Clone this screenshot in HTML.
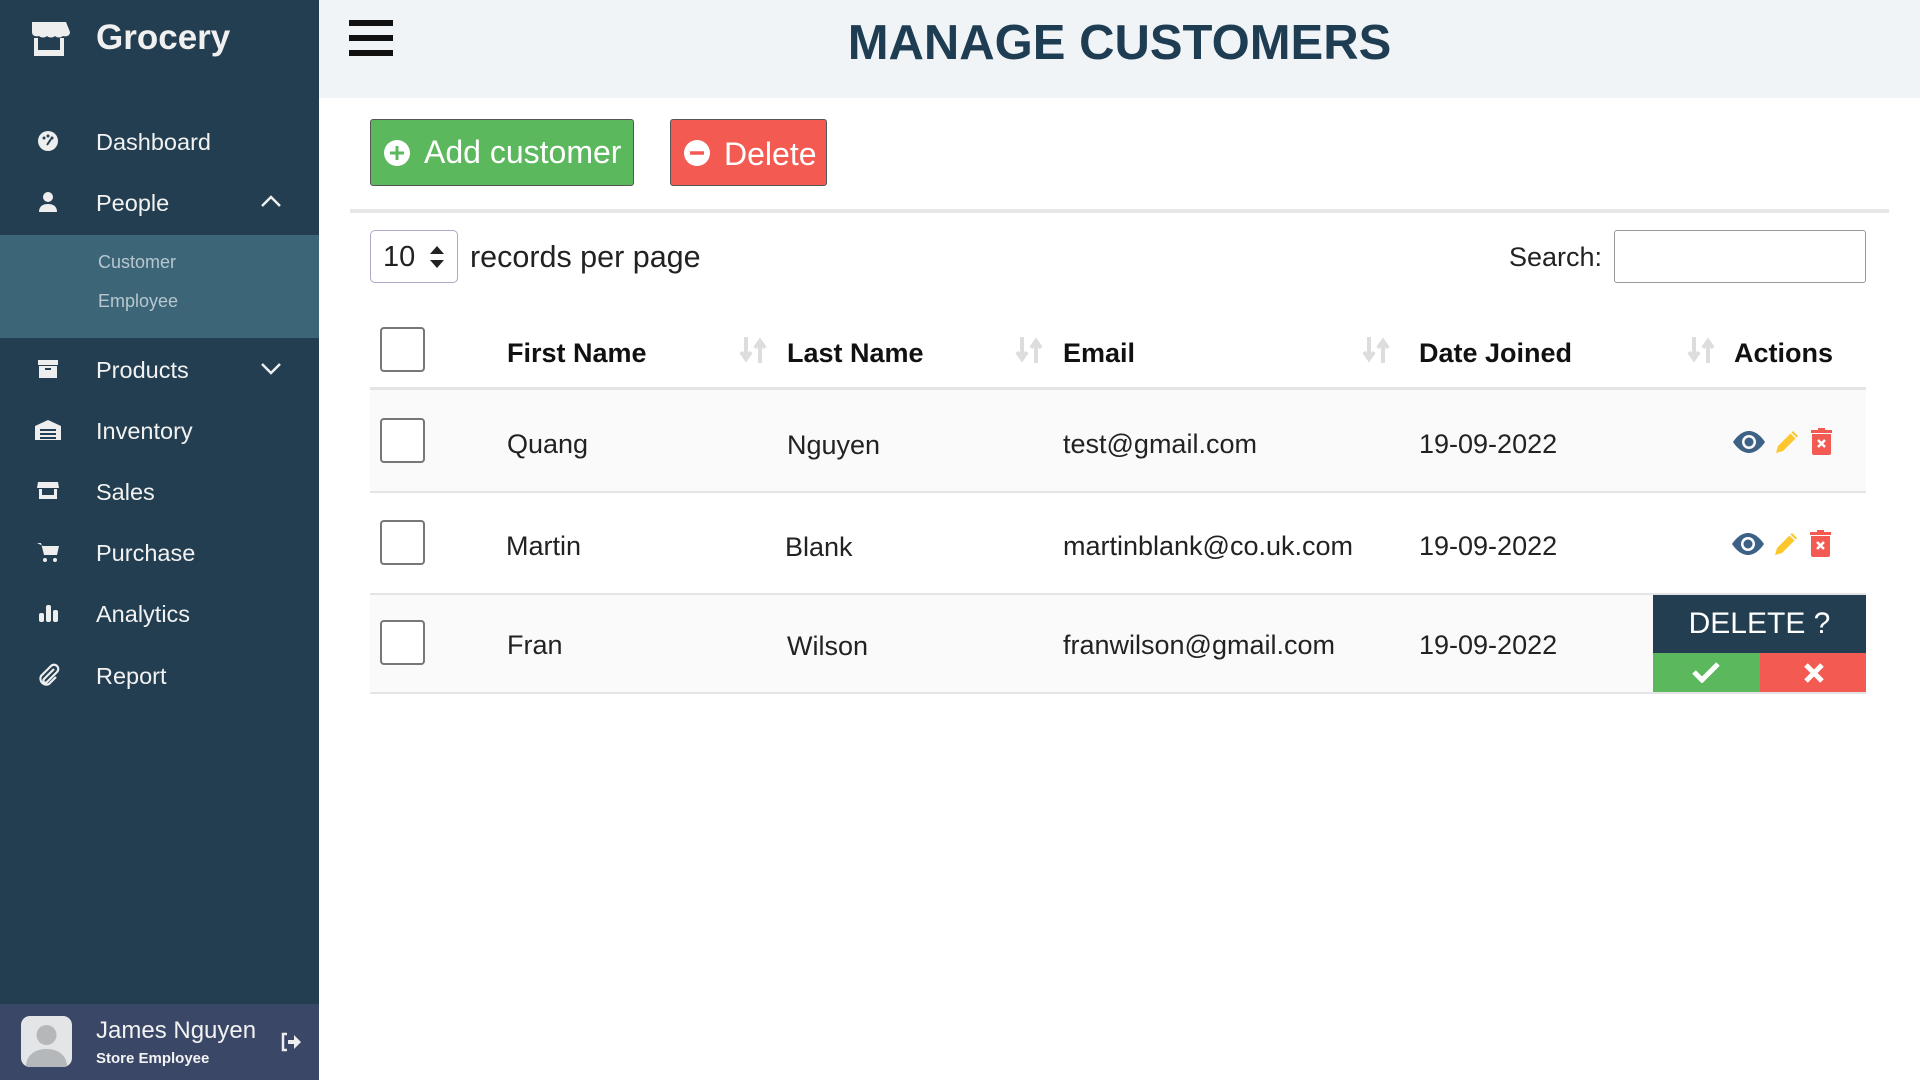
<!DOCTYPE html>
<html><head><meta charset="utf-8"><style>
*{box-sizing:border-box;margin:0;padding:0}
body{width:1920px;height:1080px;overflow:hidden;font-family:"Liberation Sans",sans-serif;background:#fff;position:relative}
.sb{position:absolute;left:0;top:0;width:319px;height:1080px;background:#223e50;color:#fff}
.abs{position:absolute}
.logo{left:96px;top:18px;font-size:35px;font-weight:bold;color:#f0f0f0}
.mi{position:absolute;left:96px;font-size:23.5px;color:#f2f2f2;line-height:30px;margin-top:1px}
.ic{position:absolute;left:36px;width:24px;height:24px}
.sub{position:absolute;left:0;top:235px;width:319px;height:103px;background:#3c6677}
.sub div{position:absolute;left:98px;font-size:18px;color:#b8c7cf}
.foot{position:absolute;left:0;top:1004px;width:319px;height:76px;background:#3a4766}
.hdr{position:absolute;left:319px;top:0;width:1601px;height:98px;background:#f0f4f7}
.title{position:absolute;left:0;width:100%;text-align:center;top:15px;font-size:49px;font-weight:bold;color:#1f3d52}
.btn{position:absolute;top:119px;height:67px;border-radius:3px;color:#fff;font-size:32px;line-height:65px;border:1px solid #555}
.th{position:absolute;top:338px;font-size:27px;font-weight:bold;color:#111}
.td{position:absolute;font-size:27px;color:#222;margin-top:2px}
.cb{position:absolute;left:380px;width:45px;height:45px;border:2px solid #777;border-radius:4px;background:#fff}
.sort{position:absolute;top:335px;width:30px;height:30px}
</style></head><body>
<div class="sb">
 <svg class="abs" style="left:28px;top:18px" width="42" height="42" viewBox="0 0 42 42"><path d="M4 4h34l4 10c0 4-4 5-7 4-2 2-6 2-8 0-2 2-6 2-8 0-2 2-6 2-8 0-3 1-7 0-7-4z" fill="#eee"/><path d="M6 20h4v12h22V20h4v18H6z" fill="#eee"/></svg>
 <div class="abs logo">Grocery</div>
 <svg class="ic" style="top:129px" viewBox="0 0 24 24"><circle cx="12" cy="12" r="10" fill="#eee"/><circle cx="8" cy="9" r="1.5" fill="#223e50"/><circle cx="12" cy="7" r="1.5" fill="#223e50"/><circle cx="16" cy="9" r="1.5" fill="#223e50"/><path d="M11 16l4-6" stroke="#223e50" stroke-width="2"/></svg>
 <div class="mi" style="top:126px">Dashboard</div>
 <svg class="ic" style="top:190px" viewBox="0 0 24 24"><circle cx="12" cy="7" r="5" fill="#eee"/><path d="M3 22c0-6 4-8 9-8s9 2 9 8z" fill="#eee"/></svg>
 <div class="mi" style="top:187px">People</div>
 <svg class="abs" style="left:260px;top:194px" width="22" height="14"><path d="M2 12l9-9 9 9" stroke="#eee" stroke-width="2.5" fill="none"/></svg>
 <div class="sub"><div style="top:17px">Customer</div><div style="top:56px">Employee</div></div>
 <svg class="ic" style="top:357px" viewBox="0 0 24 24"><rect x="2" y="3" width="20" height="5" fill="#eee"/><rect x="3" y="9" width="18" height="12" fill="#eee"/><rect x="9" y="11" width="6" height="2" fill="#223e50"/></svg>
 <div class="mi" style="top:354px">Products</div>
 <svg class="abs" style="left:260px;top:362px" width="22" height="14"><path d="M2 2l9 9 9-9" stroke="#eee" stroke-width="2.5" fill="none"/></svg>
 <svg class="ic" style="top:418px;left:34px;width:28px" viewBox="0 0 28 24"><path d="M1 8l13-6 13 6v14H1z" fill="#eee"/><rect x="6" y="11" width="16" height="2" fill="#223e50"/><rect x="6" y="15" width="16" height="2" fill="#223e50"/><rect x="6" y="19" width="16" height="2" fill="#223e50"/></svg>
 <div class="mi" style="top:415px">Inventory</div>
 <svg class="ic" style="top:479px" viewBox="0 0 24 24"><path d="M2 3h20l1 6H1z" fill="#eee"/><path d="M3 10h3v6h12v-6h3v10H3z" fill="#eee"/></svg>
 <div class="mi" style="top:476px">Sales</div>
 <svg class="ic" style="top:540px" viewBox="0 0 24 24"><path d="M1 3h4l3 12h13l2-9H7" fill="#eee"/><circle cx="9" cy="20" r="2" fill="#eee"/><circle cx="19" cy="20" r="2" fill="#eee"/></svg>
 <div class="mi" style="top:537px">Purchase</div>
 <svg class="ic" style="top:601px" viewBox="0 0 24 24"><rect x="3" y="12" width="5" height="9" rx="2" fill="#eee"/><rect x="10" y="4" width="5" height="17" rx="2" fill="#eee"/><rect x="17" y="9" width="5" height="12" rx="2" fill="#eee"/></svg>
 <div class="mi" style="top:598px">Analytics</div>
 <svg class="ic" style="top:663px" viewBox="0 0 24 24"><path d="M18 6L8 16a2 2 0 0 0 3 3L21 9a4 4 0 0 0-6-6L5 13a6 6 0 0 0 8 8l7-7" stroke="#eee" stroke-width="2.2" fill="none"/></svg>
 <div class="mi" style="top:660px">Report</div>
 <div class="foot">
  <div class="abs" style="left:21px;top:12px;width:51px;height:51px;border-radius:9px;background:#e4e5e7;overflow:hidden"><svg width="51" height="51"><circle cx="25.5" cy="19" r="10" fill="#b4b8bb"/><path d="M5 51c0-12 9-18 20.5-18S46 39 46 51z" fill="#b4b8bb"/></svg></div>
  <div class="abs" style="left:96px;top:13px;font-size:24px;color:#f2f2f2">James Nguyen</div>
  <div class="abs" style="left:96px;top:46px;font-size:15px;font-weight:bold;color:#f2f2f2">Store Employee</div>
  <svg class="abs" style="left:280px;top:28px" width="22" height="20" viewBox="0 0 22 20"><path d="M7 2H3v16h4" stroke="#eee" stroke-width="2.5" fill="none"/><path d="M8 8h6V3l7 7-7 7v-5H8z" fill="#eee"/></svg>
 </div>
</div>
<div class="hdr">
 <div class="abs" style="left:30px;top:20px;width:44px;height:36px"><div style="height:6px;background:#111;margin-bottom:9px"></div><div style="height:6px;background:#111;margin-bottom:9px"></div><div style="height:6px;background:#111"></div></div>
 <div class="title">MANAGE CUSTOMERS</div>
</div>
<div class="btn" style="left:370px;width:264px;background:#5cb85c;padding-left:53px">Add customer
 <svg class="abs" style="left:12px;top:19px" width="28" height="28"><circle cx="14" cy="14" r="13" fill="#fff"/><path d="M14 7v14M7 14h14" stroke="#5cb85c" stroke-width="3"/></svg></div>
<div class="btn" style="left:670px;width:157px;background:#f25a52;padding-left:53px;line-height:69px">Delete
 <svg class="abs" style="left:12px;top:19px" width="28" height="28"><circle cx="14" cy="14" r="13" fill="#fff"/><path d="M7 14h14" stroke="#f25a52" stroke-width="3.5"/></svg></div>
<div class="abs" style="left:350px;top:209px;width:1539px;height:4px;background:#e6e6e6"></div>
<div class="abs" style="left:370px;top:230px;width:88px;height:53px;border:1px solid #aac;border-radius:5px;font-size:29px;line-height:53px;padding-left:12px;color:#222">10
 <svg class="abs" style="left:58px;top:14px" width="16" height="24"><path d="M8 1l7 8H1z M8 23l7-8H1z" fill="#222"/></svg></div>
<div class="abs" style="left:470px;top:240px;font-size:30.5px;color:#222">records per page</div>
<div class="abs" style="left:1509px;top:242px;font-size:27px;color:#222">Search:</div>
<div class="abs" style="left:1614px;top:230px;width:252px;height:53px;border:1px solid #999;border-radius:3px"></div>

<div class="abs" style="left:370px;top:389px;width:1496px;height:102px;background:#fafafa"></div>
<div class="abs" style="left:370px;top:594px;width:1496px;height:99px;background:#fafafa"></div>
<div class="abs" style="left:370px;top:387px;width:1496px;height:3px;background:#e4e4e4"></div>
<div class="abs" style="left:370px;top:491px;width:1496px;height:2px;background:#e4e4e4"></div>
<div class="abs" style="left:370px;top:593px;width:1496px;height:2px;background:#e4e4e4"></div>
<div class="abs" style="left:370px;top:692px;width:1496px;height:2px;background:#e4e4e4"></div>

<div class="cb" style="top:327px"></div>
<div class="th" style="left:507px">First Name</div>
<div class="th" style="left:787px">Last Name</div>
<div class="th" style="left:1063px">Email</div>
<div class="th" style="left:1419px">Date Joined</div>
<div class="th" style="left:1734px">Actions</div>
<svg class="sort" style="left:738px" viewBox="0 0 30 30"><path d="M8 2v20M3 17l5 7 5-7M22 28V8M17 13l5-7 5 7" stroke="#ddd" stroke-width="4" fill="none"/></svg>
<svg class="sort" style="left:1014px" viewBox="0 0 30 30"><path d="M8 2v20M3 17l5 7 5-7M22 28V8M17 13l5-7 5 7" stroke="#ddd" stroke-width="4" fill="none"/></svg>
<svg class="sort" style="left:1361px" viewBox="0 0 30 30"><path d="M8 2v20M3 17l5 7 5-7M22 28V8M17 13l5-7 5 7" stroke="#ddd" stroke-width="4" fill="none"/></svg>
<svg class="sort" style="left:1686px" viewBox="0 0 30 30"><path d="M8 2v20M3 17l5 7 5-7M22 28V8M17 13l5-7 5 7" stroke="#ddd" stroke-width="4" fill="none"/></svg>

<div class="cb" style="top:418px"></div>
<div class="td" style="left:507px;top:427px">Quang</div>
<div class="td" style="left:787px;top:428px">Nguyen</div>
<div class="td" style="left:1063px;top:427px">test@gmail.com</div>
<div class="td" style="left:1419px;top:427px">19-09-2022</div>

<div class="cb" style="top:520px"></div>
<div class="td" style="left:506px;top:529px">Martin</div>
<div class="td" style="left:785px;top:530px">Blank</div>
<div class="td" style="left:1063px;top:529px">martinblank@co.uk.com</div>
<div class="td" style="left:1419px;top:529px">19-09-2022</div>

<div class="cb" style="top:620px"></div>
<div class="td" style="left:507px;top:628px">Fran</div>
<div class="td" style="left:787px;top:629px">Wilson</div>
<div class="td" style="left:1063px;top:628px">franwilson@gmail.com</div>
<div class="td" style="left:1419px;top:628px">19-09-2022</div>

<svg class="abs" style="left:1732px;top:428px" width="104" height="28" viewBox="0 0 104 28">
 <path d="M1 14C7 5 13 3 17 3s10 2 16 11c-6 9-12 11-16 11S7 23 1 14z" fill="#3e6186"/><circle cx="17" cy="14" r="7" fill="#fafafa"/><circle cx="17" cy="14" r="4.5" fill="#3e6186"/>
 <path d="M44 25l2-7 15-15 5 5-15 15z" fill="#fcc72c"/><path d="M59 5l5 5" stroke="#fafafa" stroke-width="1.5"/>
 <rect x="79" y="2" width="21" height="3" fill="#f25a52"/><rect x="86" y="0" width="7" height="3" fill="#f25a52"/><path d="M80 6h19v19a2 2 0 0 1-2 2H82a2 2 0 0 1-2-2z" fill="#f25a52"/><path d="M86 12l7 7M93 12l-7 7" stroke="#fff" stroke-width="2.5"/>
</svg>
<svg class="abs" style="left:1731px;top:530px" width="104" height="28" viewBox="0 0 104 28">
 <path d="M1 14C7 5 13 3 17 3s10 2 16 11c-6 9-12 11-16 11S7 23 1 14z" fill="#3e6186"/><circle cx="17" cy="14" r="7" fill="#fff"/><circle cx="17" cy="14" r="4.5" fill="#3e6186"/>
 <path d="M44 25l2-7 15-15 5 5-15 15z" fill="#fcc72c"/><path d="M59 5l5 5" stroke="#fff" stroke-width="1.5"/>
 <rect x="79" y="2" width="21" height="3" fill="#f25a52"/><rect x="86" y="0" width="7" height="3" fill="#f25a52"/><path d="M80 6h19v19a2 2 0 0 1-2 2H82a2 2 0 0 1-2-2z" fill="#f25a52"/><path d="M86 12l7 7M93 12l-7 7" stroke="#fff" stroke-width="2.5"/>
</svg>
<div class="abs" style="left:1653px;top:595px;width:213px;height:58px;background:#223e50;color:#fff;font-size:30px;text-align:center;line-height:58px">DELETE ?</div>
<div class="abs" style="left:1653px;top:653px;width:107px;height:39px;background:#5cb85c"><svg style="position:absolute;left:38px;top:8px" width="30" height="22"><path d="M3 11l8 8L27 3" stroke="#fff" stroke-width="5" fill="none"/></svg></div>
<div class="abs" style="left:1760px;top:653px;width:106px;height:39px;background:#f25a52"><svg style="position:absolute;left:43px;top:9px" width="22" height="22"><path d="M3 3l16 16M19 3L3 19" stroke="#fff" stroke-width="5"/></svg></div>
</body></html>
